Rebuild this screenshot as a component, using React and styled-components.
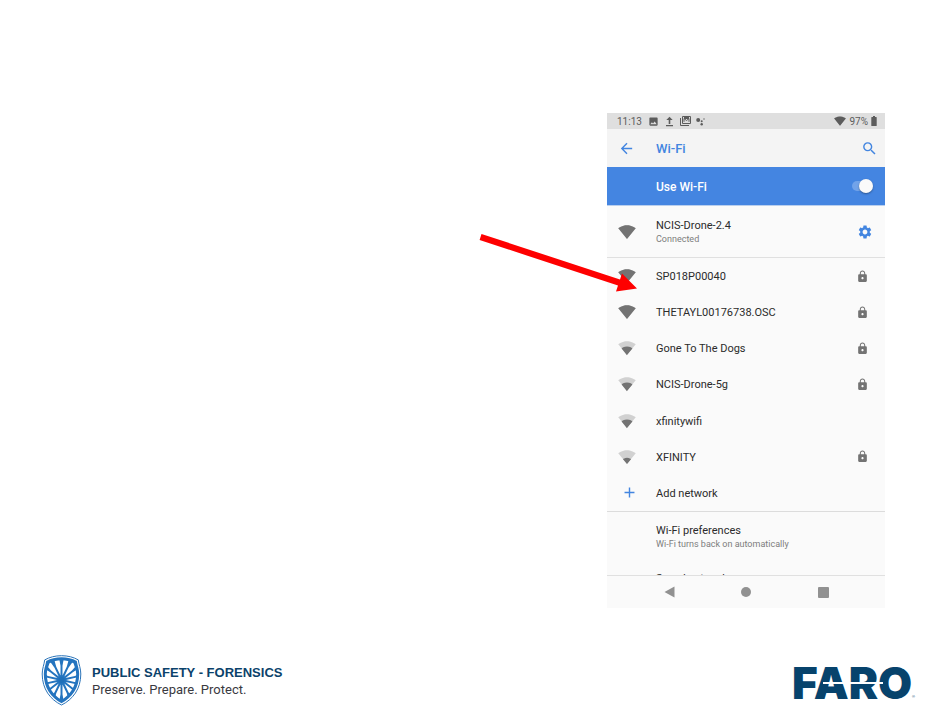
import React from 'react';
import styled, { createGlobalStyle } from 'styled-components';
import { MdAdd, MdArrowBack, MdImage, MdLock, MdSearch, MdSettings } from 'react-icons/md';

const GlobalStyle = createGlobalStyle`
  * {
    box-sizing: border-box;
  }
  body {
    margin: 0;
    background: #fff;
    font-family: Roboto, sans-serif;
  }
`;

const Slide = styled.div`
  min-height: 100vh;
  display: flex;
  flex-direction: column;
  justify-content: space-between;
  overflow: hidden;
`;

const Stage = styled.main`
  display: flex;
  justify-content: flex-end;
  padding: 113px 65px 0 0;
`;

const PhoneFrame = styled.div`
  position: relative;
`;

const Phone = styled.section`
  width: 278px;
  background: #fafafa;
  color: #2b2b2b;
`;

const StatusBar = styled.div`
  display: flex;
  align-items: center;
  gap: 6px;
  height: 16px;
  padding: 0 8px 0 10px;
  background: #dfdfdf;
  color: #5c5c5c;
  font-size: 10px;
  line-height: 14px;
`;

const StatusText = styled.span`
  padding-top: 2px;
`;

const StatusGroup = styled.div`
  display: flex;
  align-items: center;
  gap: ${(props) => props.$gap};
  margin-left: ${(props) => (props.$end ? 'auto' : '0')};
`;

const IconButton = styled.button`
  display: flex;
  justify-content: center;
  align-items: center;
  padding: 0;
  border: 0;
  background: none;
  color: ${(props) => props.$color || '#4285e0'};
  cursor: pointer;
`;

const AppBar = styled.header`
  display: grid;
  grid-template-columns: 39px 1fr 17px;
  align-items: center;
  height: 38px;
  padding-right: 7px;
  background: #f4f4f4;
`;

const Title = styled.h1`
  margin: 0;
  padding: 2px 0 0 10px;
  color: #4285e0;
  font-size: 13px;
  font-weight: 500;
  line-height: 16px;
`;

const ToggleBar = styled.label`
  display: flex;
  justify-content: space-between;
  align-items: center;
  height: 39px;
  padding: 0 12px 0 49px;
  border-bottom: 1px solid #b9cfee;
  background: #4485e1;
  color: #fff;
  font-size: 12px;
  font-weight: 500;
  line-height: 16px;
`;

const ToggleText = styled.span`
  padding-top: 2px;
`;

const Toggle = styled.input`
  appearance: none;
  display: flex;
  justify-content: flex-end;
  align-items: center;
  width: 21px;
  height: 10px;
  margin: 0;
  border-radius: 5px;
  background: #72a3e9;
  &::before {
    content: '';
    flex: none;
    width: 14px;
    height: 14px;
    border-radius: 50%;
    background: #fafafa;
    box-shadow: 0 1px 2px rgba(0, 0, 0, 0.35);
  }
`;

const Connected = styled.div`
  display: grid;
  grid-template-columns: 39px 1fr 41px;
  align-items: center;
  height: 52px;
  border-bottom: 1px solid #e0e0e0;
`;

const Details = styled.div`
  padding: 2px 0 0 10px;
`;

const Name = styled.div`
  font-size: 11px;
  line-height: 14px;
`;

const Note = styled.div`
  color: #7d7d7d;
  font-size: 9px;
  line-height: 13px;
`;

const NetworkList = styled.ul`
  display: grid;
  grid-auto-rows: 1fr;
  height: 254px;
  margin: 0;
  padding: 0;
  list-style: none;
  border-bottom: 1px solid #dcdcdc;
`;

const NetworkRow = styled.button`
  display: grid;
  grid-template-columns: 39px 1fr 45px;
  align-items: center;
  width: 100%;
  height: 100%;
  padding: 0;
  border: 0;
  background: none;
  color: inherit;
  font-family: inherit;
  text-align: left;
  cursor: pointer;
`;

const IconCell = styled.span`
  display: flex;
  justify-content: center;
  padding-left: ${(props) => (props.$indent ? '6px' : '0')};
  color: ${(props) => props.$color || '#737373'};
`;

const Preferences = styled.div`
  height: 64px;
  padding: 10px 0 0 39px;
  overflow: hidden;
  border-bottom: 1px solid #e0e0e0;
`;

const Preference = styled.div`
  margin-bottom: 19px;
`;

const NavBar = styled.nav`
  display: grid;
  grid-template-columns: repeat(3, 77px);
  justify-content: center;
  height: 32px;
`;

const Arrow = styled.svg`
  position: absolute;
  left: -128px;
  top: 120px;
  pointer-events: none;
`;

const Footer = styled.footer`
  display: flex;
  justify-content: space-between;
  align-items: center;
  padding: 0 32px 3px 41px;
`;

const Brand = styled.div`
  display: flex;
  align-items: center;
  gap: 10px;
`;

const BrandName = styled.div`
  color: #0b426b;
  font-family: 'Liberation Sans', sans-serif;
  font-size: 13px;
  font-weight: 700;
  line-height: 17px;
`;

const BrandLine = styled.div`
  color: #3a3a3f;
  font-size: 13px;
  line-height: 17px;
`;

const FAN = 'M12.01 21.49L23.64 7c-.45-.34-4.93-4-11.64-4C5.28 3 .81 6.66.36 7l11.63 14.49.01.01.01-.01z';
const LEVELS = {
  1: 'M6.67 14.86L12 21.49v.01l.01-.01 5.33-6.63C17.06 14.65 15.03 13 12 13s-5.06 1.65-5.33 1.86z',
  2: 'M4.79 12.52l7.2 8.98H12l.01-.01 7.2-8.98C18.85 12.24 16.1 10 12 10s-6.85 2.24-7.21 2.52z',
  4: FAN,
};

const Signal = ({ level, size = 18 }) => (
  <svg width={size} height={size} viewBox="0 0 24 24" fill="currentColor" aria-hidden="true">
    <path d={FAN} opacity="0.3" />
    <path d={LEVELS[level]} />
  </svg>
);

const UploadIcon = () => (
  <svg width="11" height="11" viewBox="0 0 11 11" fill="currentColor" aria-hidden="true">
    <path d="M5.5 .8L8.700 4H6.300V8H4.700V4H2.300zM2 9h7v1.200H2z" />
  </svg>
);

const NewsIcon = () => (
  <svg width="11" height="10" viewBox="0 0 11 10" fill="none" stroke="currentColor" aria-hidden="true">
    <path d="M2.5 .5h8v7h-8zM.5 2v7.5H9M4 5.8V2.5l2.5 2 2.5-2v3.3" />
    <path d="M4 2h5" strokeWidth="2" />
  </svg>
);

const AssistantIcon = () => (
  <svg width="9" height="9" viewBox="0 0 9 9" fill="currentColor" aria-hidden="true">
    <circle cx="2.2" cy="3" r="2" />
    <circle cx="5.7" cy="4.3" r="1" />
    <circle cx="5.7" cy="7.3" r="1.2" />
    <circle cx="8" cy="2" r=".7" />
  </svg>
);

const BatteryIcon = () => (
  <svg width="6" height="10" viewBox="0 0 6 10" fill="currentColor" aria-hidden="true">
    <path d="M2 0h2v1h1.2q.5 0 .5.5v8q0 .5-.5.5H.8q-.5 0-.5-.5v-8Q.3 1 .8 1H2z" />
  </svg>
);

const Shield = () => (
  <svg width="41" height="51" viewBox="0 0 41 51" aria-hidden="true">
    <defs>
      <clipPath id="shield-inner">
        <path d="M20.5 5.300c4.500 0 8.400 1.200 12 3 .8 3 2.700 6 2.700 10.700 0 12-6 20.500-14.700 26C11.800 39.500 5.800 31 5.800 19c0-4.700 1.900-7.700 2.700-10.700 3.600-1.800 7.500-3 12-3z" />
      </clipPath>
    </defs>
    <path
      d="M20.500.7c6.500 0 12 1.500 16.800 4.200.5 4.600 2.500 8.600 2.500 14.100 0 15-8 25.500-19.300 31C9.200 44.500 1.200 34 1.200 19c0-5.500 2-9.500 2.500-14.100C8.500 2.200 14 .7 20.500.7z"
      fill="#fff"
      stroke="#2b74b9"
      strokeWidth="1"
    />
    <path
      d="M20.500 2.300c5.800 0 10.800 1.300 15.300 3.600.6 4.600 2.400 8 2.400 13.100 0 14-7.200 23.800-17.700 29.200C10 42.800 2.800 33 2.800 19c0-5.100 1.800-8.500 2.400-13.100C9.700 3.600 14.700 2.300 20.500 2.300z"
      fill="#2474bf"
    />
    <g clipPath="url(#shield-inner)" fill="#fff">
      {Array.from({ length: 14 }, (_, i) => (
        <path
          key={i}
          d="M20.500 20.500L18.300 11Q17.900 2 17.500-5h6Q23.100 2 22.700 11z"
          transform={`rotate(${(i + 0.5) * (360 / 14)} 20.500 25)`}
        />
      ))}
    </g>
    <circle cx="20.5" cy="25" r="3" fill="#1f6fb8" />
  </svg>
);

const FaroLogo = () => (
  <svg width="125" height="42" viewBox="0 0 125 42" role="img" aria-label="FARO">
    <text x="-1" y="39" fill="#07436c" fontFamily="Inter, sans-serif" fontSize="44" fontWeight="900">
      FARO
    </text>
    <path d="M30 23h60" stroke="#fff" strokeWidth="2" />
    <text x="119" y="38" fill="#07436c" fontFamily="Liberation Sans, sans-serif" fontSize="4">
      ®
    </text>
  </svg>
);

const networks = [
  { name: 'SP018P00040', level: 4, locked: true },
  { name: 'THETAYL00176738.OSC', level: 4, locked: true },
  { name: 'Gone To The Dogs', level: 2, locked: true },
  { name: 'NCIS-Drone-5g', level: 2, locked: true },
  { name: 'xfinitywifi', level: 2, locked: false },
  { name: 'XFINITY', level: 1, locked: true },
];

const App = () => {
  return (
    <>
      <GlobalStyle />
      <Slide>
        <Stage>
          <PhoneFrame>
            <Phone>
              <StatusBar>
                <StatusText>11:13</StatusText>
                <StatusGroup $gap="5px">
                  <MdImage size={11} />
                  <UploadIcon />
                  <NewsIcon />
                  <AssistantIcon />
                </StatusGroup>
                <StatusGroup $gap="3px" $end>
                  <Signal level={4} size={12} />
                  <StatusText>97%</StatusText>
                  <BatteryIcon />
                </StatusGroup>
              </StatusBar>
              <AppBar>
                <IconButton aria-label="Back"><MdArrowBack size={17} /></IconButton>
                <Title>Wi-Fi</Title>
                <IconButton aria-label="Search"><MdSearch size={17} /></IconButton>
              </AppBar>
              <ToggleBar>
                <ToggleText>Use Wi-Fi</ToggleText>
                <Toggle type="checkbox" defaultChecked />
              </ToggleBar>
              <Connected>
                <IconCell><Signal level={4} /></IconCell>
                <Details>
                  <Name>NCIS-Drone-2.4</Name>
                  <Note>Connected</Note>
                </Details>
                <IconButton aria-label="Network settings"><MdSettings size={16} /></IconButton>
              </Connected>
              <NetworkList>
                {networks.map((network) => (
                  <li key={network.name}>
                    <NetworkRow>
                      <IconCell><Signal level={network.level} /></IconCell>
                      <Details><Name>{network.name}</Name></Details>
                      <IconCell>{network.locked && <MdLock size={13} />}</IconCell>
                    </NetworkRow>
                  </li>
                ))}
                <li>
                  <NetworkRow>
                    <IconCell $color="#4285e0" $indent><MdAdd size={17} /></IconCell>
                    <Details><Name>Add network</Name></Details>
                  </NetworkRow>
                </li>
              </NetworkList>
              <Preferences>
                <Preference>
                  <Details>
                    <Name>Wi-Fi preferences</Name>
                    <Note>Wi-Fi turns back on automatically</Note>
                  </Details>
                </Preference>
                <Details><Name>Saved networks</Name></Details>
              </Preferences>
              <NavBar>
                <IconButton $color="#919191" aria-label="Back">
                  <svg width="11" height="12" viewBox="0 0 11 12" fill="currentColor"><path d="M10.500.5v11L.5 6z" /></svg>
                </IconButton>
                <IconButton $color="#919191" aria-label="Home">
                  <svg width="10" height="10" viewBox="0 0 10 10" fill="currentColor"><circle cx="5" cy="5" r="5" /></svg>
                </IconButton>
                <IconButton $color="#919191" aria-label="Recent apps">
                  <svg width="11" height="11" viewBox="0 0 11 11" fill="currentColor"><rect width="11" height="11" rx="1" /></svg>
                </IconButton>
              </NavBar>
            </Phone>
            <Arrow width="160" height="62" viewBox="0 0 160 62" aria-hidden="true">
              <path d="M2.500 1L141 46.500 143 40.500 158 55.500 137 58.500 139 52.500.6 7z" fill="#fe0000" />
            </Arrow>
          </PhoneFrame>
        </Stage>
        <Footer>
          <Brand>
            <Shield />
            <div>
              <BrandName>PUBLIC SAFETY - FORENSICS</BrandName>
              <BrandLine>Preserve. Prepare. Protect.</BrandLine>
            </div>
          </Brand>
          <FaroLogo />
        </Footer>
      </Slide>
    </>
  );
};

export default App;
